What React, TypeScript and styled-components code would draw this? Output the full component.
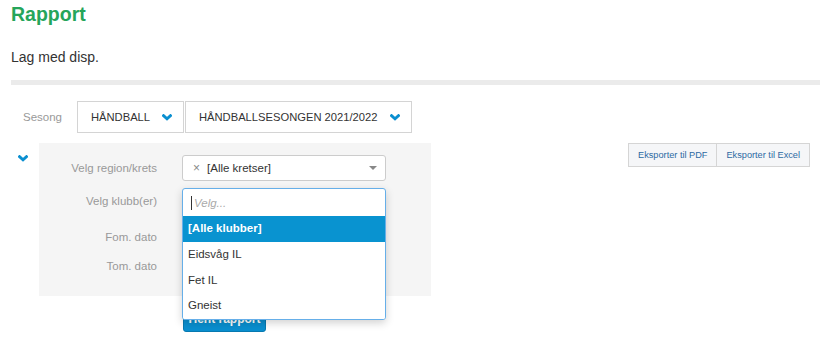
import styled, { createGlobalStyle } from "styled-components";

const GlobalStyle = createGlobalStyle`
  body {
    margin: 0;
    background: #fff;
    font-family: "Liberation Sans", Arial, sans-serif;
    color: #333;
  }
`;

const Page = styled.div`
  padding: 2px 0 0 11px;
  width: 799px;
`;

const Title = styled.h1`
  margin: 0;
  font-size: 19.5px;
  line-height: 24px;
  font-weight: bold;
  color: #25a55a;
`;

const Lead = styled.p`
  margin: 21px 0 0;
  font-size: 14px;
  line-height: 20px;
  color: #333;
`;

const Divider = styled.div`
  margin-top: 13px;
  height: 5px;
  background: #ebebeb;
  margin-right: -10px;
`;

const SeasonRow = styled.div`
  display: flex;
  align-items: center;
  margin-top: 16px;
  padding-left: 12px;
  height: 32px;
`;

const SeasonLabel = styled.span`
  font-size: 11.5px;
  color: #999;
  width: 54px;
`;

const SeasonBox = styled.div<{ $width: number }>`
  display: flex;
  align-items: center;
  justify-content: space-between;
  box-sizing: border-box;
  width: ${(p) => p.$width}px;
  height: 32px;
  padding: 0 11px 0 13px;
  border: 1px solid #d4d4d4;
  font-size: 11.2px;
  color: #333;
  text-transform: uppercase;
  & + & {
    margin-left: 1px;
  }
`;

const Chevron = ({ size = 10 }: { size?: number }) => (
  <svg width={size} height={size * 0.7} viewBox="0 0 10 7">
    <polyline
      points="1.5,1.6 5,4.8 8.5,1.6"
      fill="none"
      stroke="#0a8fd0"
      strokeWidth="2.8"
      strokeLinecap="square"
    />
  </svg>
);

const Section = styled.div`
  display: flex;
  align-items: flex-start;
  margin-top: 10px;
`;

const Toggle = styled.div`
  width: 28px;
  padding: 5px 0 0 7px;
  box-sizing: border-box;
`;

const Column = styled.div`
  display: flex;
  flex-direction: column;
`;

const Panel = styled.div`
  width: 392px;
  box-sizing: border-box;
  background: #f5f5f5;
  padding: 12px 0 16px;
  position: relative;
`;

const FormRow = styled.div<{ $h: number }>`
  display: flex;
  align-items: flex-start;
  height: ${(p) => p.$h}px;
`;

const Label = styled.label<{ $lh: number }>`
  width: 118px;
  margin-right: 25px;
  text-align: right;
  font-size: 11.5px;
  line-height: ${(p) => p.$lh}px;
  color: #999;
`;

const Select = styled.div`
  display: flex;
  align-items: center;
  box-sizing: border-box;
  width: 204px;
  height: 26px;
  padding: 0 8px 0 10px;
  background: #fff;
  border: 1px solid #ccc;
  border-radius: 3px;
  font-size: 11.5px;
  color: #333;
`;

const Clear = styled.span`
  color: #888;
  font-size: 12px;
  margin-right: 7px;
`;

const Caret = styled.span`
  margin-left: auto;
  width: 0;
  height: 0;
  border-left: 4px solid transparent;
  border-right: 4px solid transparent;
  border-top: 4px solid #888;
`;

const DateInput = styled.div`
  width: 204px;
  height: 26px;
  box-sizing: border-box;
  background: #fff;
  border: 1px solid #ccc;
  border-radius: 3px;
`;

const Menu = styled.div`
  position: absolute;
  left: 143px;
  top: 45px;
  width: 204px;
  box-sizing: border-box;
  background: #fff;
  border: 1px solid #66afe9;
  border-radius: 3px;
  box-shadow: 0 3px 8px rgba(0, 0, 0, 0.18);
  overflow: hidden;
  z-index: 2;
`;

const Search = styled.div`
  display: flex;
  align-items: center;
  height: 27px;
  padding-left: 8px;
  font-size: 11.5px;
  font-style: italic;
  color: #aaa;
  &::before {
    content: "";
    width: 1px;
    height: 14px;
    background: #333;
    margin-right: 2px;
  }
`;

const Option = styled.div<{ $active?: boolean }>`
  height: 25.75px;
  line-height: 25.75px;
  padding-left: 5px;
  font-size: 11.5px;
  color: ${(p) => (p.$active ? "#fff" : "#333")};
  font-weight: ${(p) => (p.$active ? "bold" : "normal")};
  background: ${(p) => (p.$active ? "#0993d0" : "#fff")};
`;

const Submit = styled.button`
  margin: 9px 0 0 144px;
  width: 83px;
  height: 27px;
  padding: 0;
  white-space: nowrap;
  background: #0a8fcf;
  border: 1px solid #0779b0;
  border-radius: 3px;
  color: #fff;
  font-family: inherit;
  font-size: 12px;
  font-weight: bold;
  align-self: flex-start;
`;

const ExportGroup = styled.div`
  display: flex;
  margin-left: auto;
`;

const ExportButton = styled.button`
  height: 24px;
  padding: 0 9px;
  background: #f5f6f8;
  border: 1px solid #d5d5d5;
  font-family: inherit;
  font-size: 9.2px;
  color: #2d6aa3;
  & + & {
    border-left: none;
  }
`;

const clubs = ["[Alle klubber]", "Eidsvåg IL", "Fet IL", "Gneist"];

export default function App() {
  return (
    <>
      <GlobalStyle />
      <Page>
        <Title>Rapport</Title>
        <Lead>Lag med disp.</Lead>
        <Divider />
        <SeasonRow>
          <SeasonLabel>Sesong</SeasonLabel>
          <SeasonBox $width={107}>
            HÅNDBALL <Chevron />
          </SeasonBox>
          <SeasonBox $width={227}>
            HÅNDBALLSESONGEN 2021/2022 <Chevron />
          </SeasonBox>
        </SeasonRow>
        <Section>
          <Toggle>
            <Chevron />
          </Toggle>
          <Column>
            <Panel>
              <FormRow $h={33}>
                <Label $lh={26}>Velg region/krets</Label>
                <Select>
                  <Clear>×</Clear>
                  [Alle kretser]
                  <Caret />
                </Select>
              </FormRow>
              <FormRow $h={34}>
                <Label $lh={27}>Velg klubb(er)</Label>
              </FormRow>
              <FormRow $h={30}>
                <Label $lh={30}>Fom. dato</Label>
                <DateInput />
              </FormRow>
              <FormRow $h={28}>
                <Label $lh={28}>Tom. dato</Label>
                <DateInput />
              </FormRow>
              <Menu>
                <Search>Velg...</Search>
                {clubs.map((c, i) => (
                  <Option key={c} $active={i === 0}>
                    {c}
                  </Option>
                ))}
              </Menu>
            </Panel>
            <Submit>Hent rapport</Submit>
          </Column>
          <ExportGroup>
            <ExportButton>Eksporter til PDF</ExportButton>
            <ExportButton>Eksporter til Excel</ExportButton>
          </ExportGroup>
        </Section>
      </Page>
    </>
  );
}
